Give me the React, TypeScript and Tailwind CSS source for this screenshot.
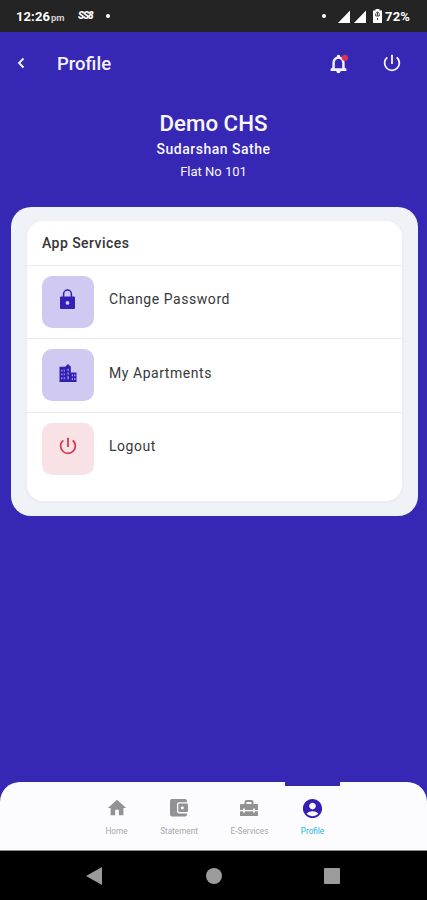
import type { ReactNode } from "react";
import { MdAccountCircle, MdHome, MdPowerSettingsNew } from "react-icons/md";

function StatusBar() {
  return (
    <div className="flex h-8 items-center bg-[#242424] pr-4 pl-[16px] text-white">
      <span className="w-[35px] text-[13px] leading-none font-bold tracking-[0.1px]">
        12:26
      </span>
      <span className="mt-[3px] w-[27px] text-[9.500px] leading-none font-bold text-[#cfcfcf]">
        pm
      </span>
      <span className="w-[28px] text-[10px] leading-none font-black tracking-[-1.100px] italic">
        SS8
      </span>
      <span className="size-1 rounded-full bg-white" />
      <span className="ml-auto size-1 rounded-full bg-white" />
      <svg viewBox="0 0 28 13" className="ml-[12px] h-[13px] w-[28px] fill-white">
        <path d="M0 13L12 0.5V13z" />
        <path d="M16 13L28 0.5V13z" />
      </svg>
      <svg viewBox="0 0 9 14" className="ml-[7px] h-[14px] w-[9px]">
        <path d="M2.5 0h4v1.5H9V14H0V1.5h2.5z" fill="#fff" />
        <path
          d="M2.5 4.5L4.5 3l2 1.5M4.5 3v4M2.7 5v2h3.6V5M4.5 9v2"
          fill="none"
          stroke="#444"
          strokeWidth="1"
        />
      </svg>
      <span className="ml-[3px] w-[26px] text-[13px] leading-none font-bold tracking-[0.200px]">
        72%
      </span>
    </div>
  );
}

function BackIcon() {
  return (
    <svg viewBox="0 0 8 12" className="h-[12px] w-[8px]">
      <path
        d="M6.500 1.500L2 6l4.500 4.500"
        fill="none"
        stroke="#f4f2ff"
        strokeWidth="1.900"
      />
    </svg>
  );
}

function BellIcon() {
  return (
    <svg viewBox="0 0 24 24" className="size-[21px]">
      <path
        fill="#f4f2ff"
        d="M9.500 20.500h5c0 1.400-1.100 2.500-2.500 2.500s-2.500-1.100-2.500-2.500M21 18v2.500H3V18l2-1.500V11c0-3.100 2-5.800 5-6.700V4a2 2 0 1 1 4 0v.3c3 .9 5 3.600 5 6.700v5.500zm-4.800-7c0-2.500-1.800-4.500-4.200-4.500S7.800 8.500 7.800 11v6.500h8.400z"
      />
      <circle cx="19.300" cy="5.500" r="3.600" fill="#dc3250" />
    </svg>
  );
}

function LockIcon() {
  return (
    <svg viewBox="0 0 15 20" className="mr-[1px] mb-[1px] h-[20px] w-[15px]">
      <path
        d="M3.600 8V5a3.900 3.900 0 0 1 7.800 0v3"
        fill="none"
        stroke="#3420b4"
        strokeWidth="1.500"
      />
      <path
        fill="#3420b4"
        fillRule="evenodd"
        d="M1 7.500h13q1 0 1 1V19q0 1-1 1H1q-1 0-1-1V8.500q0-1 1-1M7.500 12a1.900 1.900 0 1 0 0 3.800a1.900 1.900 0 1 0 0-3.800"
      />
    </svg>
  );
}

function CityIcon() {
  return (
    <svg viewBox="3 2 18 19" className="h-[18px] w-[18px]">
      <path
        fill="#3420b4"
        d="M15 11V5l-3-3-3 3H3v16h18V11z"
      />
      <path
        fill="#b8aeea"
        d="M5 8h1v2H5zM5 12h1v2H5zM5 16h1v2H5zM7.500 8h1v2h-1zM7.500 12h1v2h-1zM7.500 16h1v2h-1zM11.500 7h1.200v2h-1.200zM11.500 11h1.200v2h-1.200zM11.500 15h1.200v3h-1.200zM16 13h1.200v2H16zM16 17h1.200v2H16zM18.600 13h1.200v2h-1.200zM18.600 17h1.200v2h-1.200z"
      />
    </svg>
  );
}

function WalletIcon() {
  return (
    <svg viewBox="0 0 20 20" className="size-[20px]">
      <rect x="1" y="1" width="17" height="17.500" rx="2" fill="#929292" />
      <rect x="8" y="4.200" width="12" height="11.200" rx="2" fill="#fcfcfe" />
      <rect x="9.300" y="5.600" width="9.700" height="8.400" rx="1" fill="#929292" />
      <circle cx="13.300" cy="9.800" r="1.600" fill="#fcfcfe" />
    </svg>
  );
}

function ToolboxIcon() {
  return (
    <svg viewBox="0 0 20 18" className="mr-[1px] h-[18px] w-[20px]">
      <path
        fill="#929292"
        d="M5.500 5V3a2 2 0 0 1 2-2h5a2 2 0 0 1 2 2v2H18q1 0 1 1v5h-3V9.500h-2V11H6V9.500H4V11H1V6q0-1 1-1zm2 0h5V3h-5zM1 12.200h3v1.300h2v-1.300h8v1.300h2v-1.300h3V17H1z"
      />
    </svg>
  );
}

function ServiceRow({
  icon,
  label,
  box,
}: {
  icon: ReactNode;
  label: string;
  box: string;
}) {
  return (
    <div className="flex h-[73.500px] items-start border-t border-[#e9eaec] pt-[10px] pl-[15px]">
      <div
        className={`flex h-[52px] w-[52px] items-center justify-center rounded-[10px] pb-[5px] ${box}`}
      >
        {icon}
      </div>
      <p className="mt-[14.500px] ml-[15px] text-[14px] leading-[18px] tracking-[0.550px] text-[#38383a]">
        {label}
      </p>
    </div>
  );
}

function NavItem({
  icon,
  label,
  className,
}: {
  icon: ReactNode;
  label: string;
  className: string;
}) {
  return (
    <div className={`flex h-full flex-col items-center border-t-4 ${className}`}>
      <div className="mt-[10px] flex h-6 items-center">{icon}</div>
      <span className="mt-[5px] text-[8.200px] leading-[12px] whitespace-nowrap">
        {label}
      </span>
    </div>
  );
}

export default function App() {
  return (
    <div className="flex h-[900px] w-[427px] flex-col overflow-hidden bg-[#3628b5] font-['Roboto',sans-serif]">
      <StatusBar />

      <header className="flex h-[62px] items-center pr-[24px] pl-[17px] text-[#f4f2ff]">
        <BackIcon />
        <h1 className="mt-[2px] ml-[32px] text-[18.500px] leading-[22px] font-medium">
          Profile
        </h1>
        <div className="ml-auto flex items-center gap-[32px]">
          <BellIcon />
          <MdPowerSettingsNew className="size-[22px]" />
        </div>
      </header>

      <div className="flex flex-col items-center pt-[15px] text-[#f8f7ff]">
        <h2 className="text-[22.300px] leading-[28px] font-medium">Demo CHS</h2>
        <p className="mt-[2px] text-[14px] leading-[20px] font-medium tracking-[0.500px]">
          Sudarshan Sathe
        </p>
        <p className="mt-[4px] text-[13px] leading-[18px]">Flat No 101</p>
      </div>

      <div className="mt-[26px] mr-[9px] ml-[11px] h-[309px] rounded-[20px] bg-[#eff3f8] pt-[14px] pr-[16px] pl-[16px]">
        <div className="h-[280px] rounded-[16px] bg-white shadow-[0_1px_4px_rgba(40,50,90,0.05)]">
          <h4 className="h-[43.500px] pt-[13px] pl-[15px] text-[14px] leading-[18px] font-medium tracking-[0.450px] text-[#343436]">
            App Services
          </h4>
          <ServiceRow
            icon={<LockIcon />}
            label="Change Password"
            box="bg-[#d0caf2]"
          />
          <ServiceRow
            icon={<CityIcon />}
            label="My Apartments"
            box="bg-[#d0caf2]"
          />
          <ServiceRow
            icon={<MdPowerSettingsNew className="size-[22px] text-[#d63c4e]" />}
            label="Logout"
            box="bg-[#f8e2e6]"
          />
        </div>
      </div>

      <nav className="mt-auto flex h-[69px] shrink-0 rounded-t-[20px] border-b border-[#8a8a8a] bg-[#fcfcfe] pl-[89px]">
        <NavItem
          icon={<MdHome className="size-[22px] text-[#929292]" />}
          label="Home"
          className="w-[55px] border-transparent text-[#a5a5a8]"
        />
        <NavItem
          icon={<WalletIcon />}
          label="Statement"
          className="w-[70px] border-transparent text-[#a5a5a8]"
        />
        <NavItem
          icon={<ToolboxIcon />}
          label="E-Services"
          className="w-[71px] border-transparent text-[#a5a5a8]"
        />
        <NavItem
          icon={<MdAccountCircle className="size-[23px] text-[#3420b4]" />}
          label="Profile"
          className="w-[55px] border-[#3628b5] text-[#27b4da]"
        />
      </nav>

      <div className="flex h-[49px] shrink-0 items-center bg-black pl-[86px]">
        <svg viewBox="0 0 16 18" className="h-[18px] w-[16px] fill-[#9b9b9b]">
          <path d="M16 0v18L0 9z" />
        </svg>
        <span className="ml-[104px] size-4 rounded-full bg-[#9b9b9b]" />
        <span className="ml-[102px] size-4 rounded-[1px] bg-[#9b9b9b]" />
      </div>
    </div>
  );
}
